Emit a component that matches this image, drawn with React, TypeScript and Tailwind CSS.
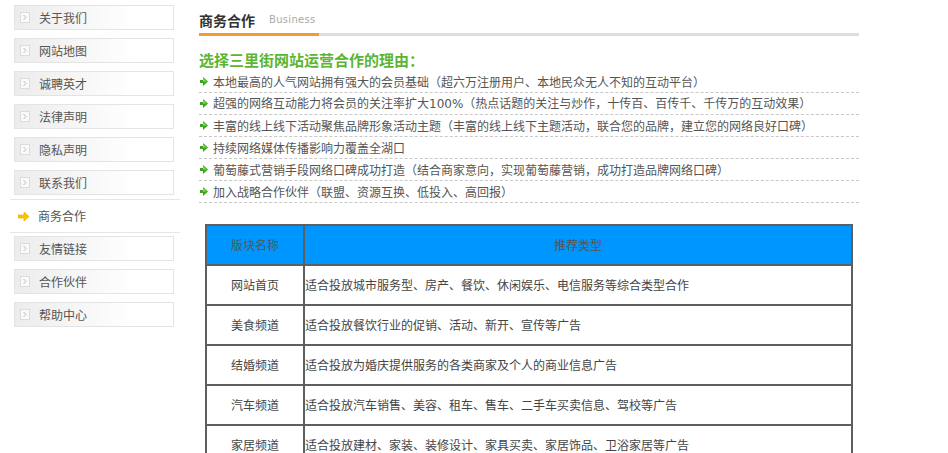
import React from "react";

const FONT = { fontFamily: '"Noto Sans CJK SC", "Liberation Sans", sans-serif' };

function BoxArrow() {
  return (
    <svg width="10" height="11" viewBox="0 0 10 11" className="shrink-0">
      <rect x="0.5" y="0.5" width="9" height="10" fill="#fafafa" stroke="#dcdcdc" />
      <path d="M3.5 3 L6 5.5 L3.5 8" fill="none" stroke="#b8b8b8" strokeWidth="1" />
    </svg>
  );
}

function YellowArrow() {
  return (
    <svg width="11" height="9" viewBox="0 0 11 9" className="shrink-0">
      <path d="M0 3 H6 V0 L11 4.5 L6 9 V6 H0 Z" fill="#f7c600" stroke="#e0a800" strokeWidth="0.6" />
    </svg>
  );
}

function GreenBullet() {
  return (
    <svg width="8" height="9" viewBox="0 0 8 9" className="shrink-0">
      <path d="M0 3 H3 V0 L8 4.5 L3 9 V6 H0 Z" fill="#3ea521" />
      <path d="M3 1.3 L6.6 4.5 L3 4.5 Z" fill="#8ddb62" />
    </svg>
  );
}

const before = ["关于我们", "网站地图", "诚聘英才", "法律声明", "隐私声明", "联系我们"];
const after = ["友情链接", "合作伙伴", "帮助中心"];

function Box({ label, className = "" }: { label: string; className?: string }) {
  return (
    <div
      className={`ml-[4px] w-[160px] h-[25px] shrink-0 border border-[#e4e4e4] bg-[linear-gradient(to_right,#ececec,#ffffff_75%)] flex items-center pl-[5px] ${className}`}
    >
      <BoxArrow />
      <span className="ml-[9px] text-[12px] leading-[14px] text-[#555]">{label}</span>
    </div>
  );
}

const reasons: React.ReactNode[] = [
  "本地最高的人气网站拥有强大的会员基础（超六万注册用户、本地民众无人不知的互动平台）",
  <>
    超强的网络互动能力将会员的关注率扩大
    <span style={{ fontFamily: '"DejaVu Sans", sans-serif' }} className="text-[12px]">100%</span>
    （热点话题的关注与炒作，十传百、百传千、千传万的互动效果）
  </>,
  "丰富的线上线下活动聚焦品牌形象活动主题（丰富的线上线下主题活动，联合您的品牌，建立您的网络良好口碑）",
  "持续网络媒体传播影响力覆盖全湖口",
  "葡萄藤式营销手段网络口碑成功打造（结合商家意向，实现葡萄藤营销，成功打造品牌网络口碑）",
  "加入战略合作伙伴（联盟、资源互换、低投入、高回报）",
];

const rows = [
  ["网站首页", "适合投放城市服务型、房产、餐饮、休闲娱乐、电信服务等综合类型合作"],
  ["美食频道", "适合投放餐饮行业的促销、活动、新开、宣传等广告"],
  ["结婚频道", "适合投放为婚庆提供服务的各类商家及个人的商业信息广告"],
  ["汽车频道", "适合投放汽车销售、美容、租车、售车、二手车买卖信息、驾校等广告"],
  ["家居频道", "适合投放建材、家装、装修设计、家具买卖、家居饰品、卫浴家居等广告"],
];

export default function App() {
  return (
    <div className="w-[948px] h-[453px] overflow-hidden bg-white flex items-start" style={FONT}>
      {/* sidebar */}
      <div className="ml-[10px] w-[170px] shrink-0 pt-[5px] flex flex-col">
        {before.map((l) => (
          <Box key={l} label={l} className="mb-[8px]" />
        ))}
        <div className="-mt-[4px] mb-[3px] h-[34px] shrink-0 border-y border-[#e6e6e6] flex items-center pl-[8px]">
          <YellowArrow />
          <span className="ml-[9px] text-[12px] leading-[14px] text-[#555]">商务合作</span>
        </div>
        {after.map((l) => (
          <Box key={l} label={l} className="mb-[8px]" />
        ))}
      </div>

      {/* main */}
      <div className="ml-[19px] w-[660px] shrink-0">
        <div className="h-[33px] pt-[12px] flex items-start">
          <span className="text-[14px] leading-[16px] font-bold text-[#333]">商务合作</span>
          <span
            className="ml-[14px] text-[10px] leading-[16px] text-[#aaa] tracking-[0.3px]"
            style={{ fontFamily: '"DejaVu Sans", sans-serif' }}
          >
            Business
          </span>
        </div>
        <div className="h-[3px] bg-[#dddddd] flex">
          <div className="w-[120px] h-full bg-[#f39b2f]" />
        </div>
        <div className="mt-[14px] h-[20px] flex items-center text-[15px] font-bold text-[#5cb532]">
          选择三里街网站运营合作的理由：
        </div>
        <ul className="mt-[1px]">
          {reasons.map((r, i) => (
            <li
              key={i}
              className="h-[22px] border-b border-dashed border-[#c8c8c8] flex items-center pl-[1px] text-[12px] text-[#555] whitespace-nowrap"
            >
              <GreenBullet />
              <span className="ml-[5px]">{r}</span>
            </li>
          ))}
        </ul>

        <table className="mt-[21px] ml-[6px] w-[648px] border-collapse border-2 border-[#5f5f5f] text-[12px] text-[#444]">
          <thead>
            <tr className="h-[40px] bg-[#0096ff]">
              <th className="w-[98px] border-2 border-[#5f5f5f] font-normal text-[#555]">版块名称</th>
              <th className="border-2 border-[#5f5f5f] font-normal text-[#555]">推荐类型</th>
            </tr>
          </thead>
          <tbody>
            {rows.map(([a, b]) => (
              <tr key={a} className="h-[40px]">
                <td className="border-2 border-[#5f5f5f] text-center">{a}</td>
                <td className="border-2 border-[#5f5f5f] text-left pl-0 whitespace-nowrap">{b}</td>
              </tr>
            ))}
          </tbody>
        </table>
      </div>
    </div>
  );
}
